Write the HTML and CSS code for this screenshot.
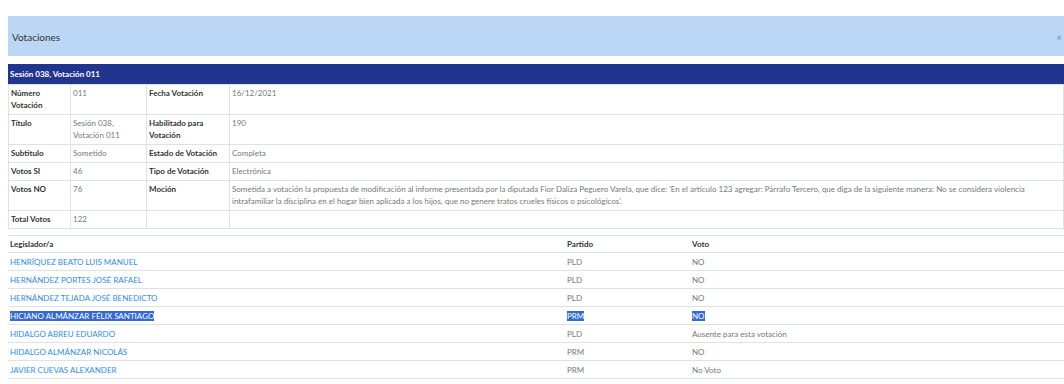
FILE: index.html
```html
<!DOCTYPE html>
<html lang="es">
<head>
    <meta charset="UTF-8">
    <title>Votaciones</title>
    <link rel="stylesheet" href="styles.css">
</head>
<body>
    <div class="modal">
        <div class="modal-header">
            <span class="modal-title">Votaciones</span>
            <span class="close">&times;</span>
        </div>

        <div class="panel-title">Sesión 038, Votación 011</div>
        <table class="detail">
            <colgroup>
                <col class="c1"><col class="c2"><col class="c3"><col>
            </colgroup>
            <tr>
                <th>Número Votación</th><td>011</td>
                <th>Fecha Votación</th><td>16/12/2021</td>
            </tr>
            <tr>
                <th>Título</th><td>Sesión 038, Votación 011</td>
                <th>Habilitado para Votación</th><td>190</td>
            </tr>
            <tr>
                <th>Subtitulo</th><td>Sometido</td>
                <th>Estado de Votación</th><td>Completa</td>
            </tr>
            <tr>
                <th>Votos SI</th><td>46</td>
                <th>Tipo de Votación</th><td>Electrónica</td>
            </tr>
            <tr>
                <th>Votos NO</th><td>76</td>
                <th>Moción</th>
                <td>Sometida a votación la propuesta de modificación al informe presentada por la diputada Fior Daliza Peguero Varela, que dice: 'En el artículo 123 agregar: Párrafo Tercero, que diga de la siguiente manera: No se considera violencia<br>intrafamiliar la disciplina en el hogar bien aplicada a los hijos, que no genere tratos crueles físicos o psicológicos'.</td>
            </tr>
            <tr>
                <th>Total Votos</th><td>122</td>
                <th></th><td></td>
            </tr>
        </table>

        <table class="votes">
            <colgroup>
                <col class="v1"><col class="v2"><col>
            </colgroup>
            <thead>
                <tr><th>Legislador/a</th><th>Partido</th><th>Voto</th></tr>
            </thead>
            <tbody>
                <tr><td><a href="#">HENRÍQUEZ BEATO LUIS MANUEL</a></td><td>PLD</td><td>NO</td></tr>
                <tr><td><a href="#">HERNÁNDEZ PORTES JOSÉ RAFAEL</a></td><td>PLD</td><td>NO</td></tr>
                <tr><td><a href="#">HERNÁNDEZ TEJADA JOSÉ BENEDICTO</a></td><td>PLD</td><td>NO</td></tr>
                <tr class="selected"><td><a href="#"><span>HICIANO ALMÁNZAR FÉLIX SANTIAGO</span></a></td><td><span>PRM</span></td><td><span>NO</span></td></tr>
                <tr><td><a href="#">HIDALGO ABREU EDUARDO</a></td><td>PLD</td><td>Ausente para esta votación</td></tr>
                <tr><td><a href="#">HIDALGO ALMÁNZAR NICOLÁS</a></td><td>PRM</td><td>NO</td></tr>
                <tr><td><a href="#">JAVIER CUEVAS ALEXANDER</a></td><td>PRM</td><td>No Voto</td></tr>
                <tr><td><a href="#">JIMÉNEZ ROSARIO JUAN</a></td><td>PRM</td><td>NO</td></tr>
            </tbody>
        </table>
    </div>
</body>
</html>
```

FILE: styles.css
```css
* {
    margin: 0;
    padding: 0;
    box-sizing: border-box;
}

html, body {
    height: 100%;
    overflow: hidden;
}

body {
    background: #fff;
    font-family: Lato, 'Open Sans', sans-serif;
    font-size: 8px;
    color: #333;
}

.modal {
    padding: 16px 0 0 8px;
}

.modal-header {
    height: 40px;
    background-color: #bcd6f5;
    display: flex;
    align-items: center;
    justify-content: space-between;
    padding: 1px 2px 0 4px;
}

.modal-title {
    font-size: 10px;
    color: #333;
}

.close {
    font-size: 10px;
    color: #7a86b8;
}

.panel-title {
    margin-top: 8px;
    height: 20px;
    line-height: 20px;
    background-color: #21358f;
    color: #fff;
    font-weight: bold;
    padding-left: 2px;
}

table {
    width: 100%;
    border-collapse: collapse;
}

th, td {
    text-align: left;
    vertical-align: top;
    line-height: 12px;
    padding: 2px 3px 3px 2px;
}

.detail th, .detail td {
    border: 1px solid #dee2e6;
}

.detail th {
    font-weight: bold;
    color: #333;
}

.detail td {
    color: #777;
}

.detail .c1 { width: 62px; }
.detail .c2 { width: 76px; }
.detail .c3 { width: 83px; }

.votes {
    margin-top: 6px;
}

.votes th, .votes td {
    border-top: 1px solid #dee2e6;
    border-bottom: 1px solid #dee2e6;
    padding: 3px 3px 2px 2px;
}

.votes th {
    font-weight: bold;
    color: #333;
    padding: 2px 3px 2px 2px;
}

.votes td {
    color: #777;
}

.votes .v1 { width: 557px; }
.votes .v2 { width: 125px; }

.votes a {
    color: #2f8cf0;
    text-decoration: none;
}

.selected span {
    background-color: #3468d4;
    color: #fff;
}
```
